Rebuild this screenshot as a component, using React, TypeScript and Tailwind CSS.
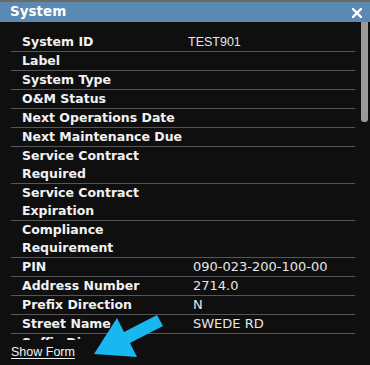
import React from 'react';

type Row = { label: string; value?: string; arial?: boolean };

const rows: Row[] = [
  { label: 'System ID', value: 'TEST901', arial: true },
  { label: 'Label' },
  { label: 'System Type' },
  { label: 'O&M Status' },
  { label: 'Next Operations Date' },
  { label: 'Next Maintenance Due' },
  { label: 'Service Contract Required' },
  { label: 'Service Contract Expiration' },
  { label: 'Compliance Requirement' },
  { label: 'PIN', value: '090-023-200-100-00' },
  { label: 'Address Number', value: '2714.0' },
  { label: 'Prefix Direction', value: 'N' },
  { label: 'Street Name', value: 'SWEDE RD' },
  { label: 'Suffix Direction' },
  { label: 'Street Type' },
];

const App: React.FC = () => {
  return (
    <div className="relative w-[370px] h-[365px] overflow-hidden bg-[#0f0f0f] flex flex-col font-['DejaVu_Sans',sans-serif]">
      <div className="h-[2px] bg-[#6d6a63]" />
      <div className="h-[20px] bg-[#5a89b3] flex items-center justify-between pl-[10px] pr-[8px]">
        <span className="text-white font-bold text-[13.5px] leading-none">System</span>
        <svg width="10" height="10" viewBox="0 0 10 10" className="mt-[1px]">
          <path d="M1 1L9 9M9 1L1 9" stroke="white" strokeWidth="2.4" strokeLinecap="square" />
        </svg>
      </div>

      <div className="flex-1 flex min-h-0">
        <div className="flex-1 flex flex-col min-w-0">
          <div className="h-[318px] shrink-0 overflow-hidden pt-[11px] pl-[11px]">
            <div className="w-[344px]">
              {rows.map((r) => (
                <div key={r.label} className="flex border-b border-[#565656] leading-[18px]">
                  <div className="w-[177px] shrink-0 pl-[11px] font-bold text-[12.5px] text-[#f2f2f2]">{r.label}</div>
                  {r.arial ? (
                    <div className="flex-1 font-['Liberation_Sans',sans-serif] text-[12.5px] text-[#e6e6e6]">{r.value}</div>
                  ) : (
                    <div className="flex-1 pl-[5px] text-[13px] text-[#e6e6e6]">{r.value ?? ''}</div>
                  )}
                </div>
              ))}
            </div>
          </div>
          <div className="pl-[11px] pt-[5px] text-[12.5px] leading-[14px] font-['Liberation_Sans',sans-serif]">
            <span className="text-[#f2f2f2] underline underline-offset-2">Show Form</span>
          </div>
        </div>
        <div className="w-[7px] mr-[2px] flex flex-col">
          <div className="h-[100px] bg-[#9a9a9a] rounded-b-[3px]" />
        </div>
      </div>

      <svg className="absolute left-0 top-0 pointer-events-none" width="370" height="365" viewBox="0 0 370 365">
        <polygon
          points="94,354 117,318 124,332 157,315 163,326 130,343 137,357"
          fill="#19b7ef"
        />
      </svg>
    </div>
  );
};

export default App;
